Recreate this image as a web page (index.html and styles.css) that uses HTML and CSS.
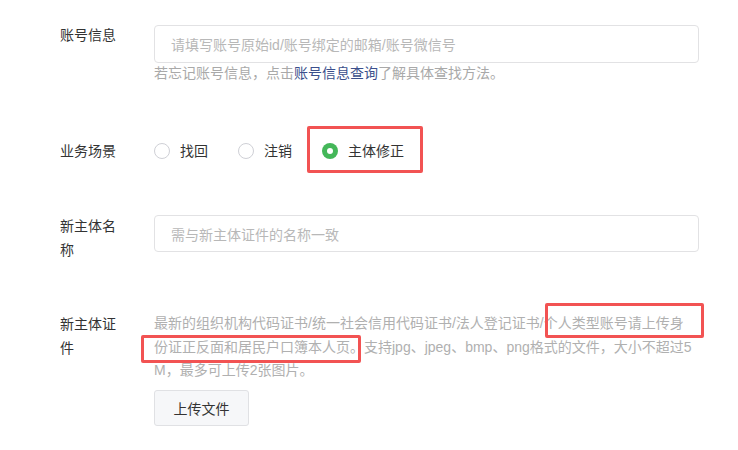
FILE: index.html
```html
<!DOCTYPE html>
<html lang="zh-CN">
<head>
<meta charset="utf-8">
<link rel="stylesheet" href="styles.css">
</head>
<body>
<div class="page">
  <div class="row row-account">
    <div class="label">账号信息</div>
    <div class="field">
      <div class="input"><span class="placeholder">请填写账号原始id/账号绑定的邮箱/账号微信号</span></div>
      <div class="tip">若忘记账号信息，点击<span class="link">账号信息查询</span>了解具体查找方法。</div>
    </div>
  </div>

  <div class="row row-scene">
    <div class="label">业务场景</div>
    <div class="field radios">
      <div class="radio"><span class="circle"></span><span>找回</span></div>
      <div class="radio"><span class="circle"></span><span>注销</span></div>
      <div class="radio"><span class="circle checked"></span><span>主体修正</span></div>
    </div>
  </div>

  <div class="row row-name">
    <div class="label">新主体名称</div>
    <div class="field">
      <div class="input"><span class="placeholder">需与新主体证件的名称一致</span></div>
    </div>
  </div>

  <div class="row row-cert">
    <div class="label">新主体证件</div>
    <div class="field">
      <div class="desc">最新的组织机构代码证书/统一社会信用代码证书/法人登记证书/个人类型账号请上传身份证正反面和居民户口簿本人页。支持jpg、jpeg、bmp、png格式的文件，大小不超过5M，最多可上传2张图片。</div>
      <div class="button">上传文件</div>
    </div>
  </div>

  <div class="mark mark-radio"></div>
  <div class="mark mark-line1"></div>
  <div class="mark mark-line2"></div>
</div>
</body>
</html>
```

FILE: styles.css
```css
* { box-sizing: border-box; }
html, body { margin: 0; padding: 0; background: #fff; }
body {
  font-family: "Liberation Sans", "Noto Sans CJK SC", sans-serif;
  font-size: 14px;
  color: #333;
}
.page {
  position: relative;
  width: 738px;
  height: 450px;
  padding: 23px 0 0 60px;
  overflow: hidden;
}
.row {
  display: flex;
  gap: 34px;
  align-items: flex-start;
}
.label {
  width: 60px;
  line-height: 24px;
  color: #333;
  flex: none;
}
.field {
  width: 545px;
  flex: none;
}
.input {
  margin-top: 2px;
  height: 38px;
  border: 1px solid #e2e2e4;
  border-radius: 4px;
  padding: 0 16px;
  display: flex;
  align-items: center;
}
.placeholder { color: #b8b8b8; }
.tip {
  margin-top: 0;
  line-height: 20px;
  color: #a9a9a9;
}
.link { color: #3b4f8c; }

.row-scene { margin-top: 56px; }
.radios {
  display: flex;
  gap: 30px;
  line-height: 24px;
}
.radio {
  display: flex;
  align-items: center;
  gap: 10px;
}
.circle {
  width: 16px;
  height: 16px;
  border: 1px solid #cfd0d6;
  border-radius: 50%;
  display: inline-block;
  position: relative;
}
.circle.checked {
  border: none;
  background: #44b759;
}
.circle.checked::after {
  content: "";
  position: absolute;
  left: 5px;
  top: 5px;
  width: 6px;
  height: 6px;
  border-radius: 50%;
  background: #fff;
}

.row-name { margin-top: 51px; }
.row-name .input { margin-top: 1px; height: 37px; }

.row-cert { margin-top: 50px; }
.desc {
  width: 541px;
  line-height: 23.7px;
  color: #b0b0b0;
  word-break: break-all;
}
.button {
  margin-top: 7px;
  width: 95px;
  height: 36px;
  border: 1px solid #e0e1e4;
  border-radius: 3px;
  background: #f6f7f9;
  color: #333;
  display: flex;
  align-items: center;
  justify-content: center;
}

.mark {
  position: absolute;
  border: 3px solid #f25353;
  border-radius: 2px;
}
.mark-radio { left: 307px; top: 126px; width: 116px; height: 47px; }
.mark-line1 { left: 545px; top: 303px; width: 159px; height: 35px; }
.mark-line2 { left: 141px; top: 335px; width: 220px; height: 28px; }
```
